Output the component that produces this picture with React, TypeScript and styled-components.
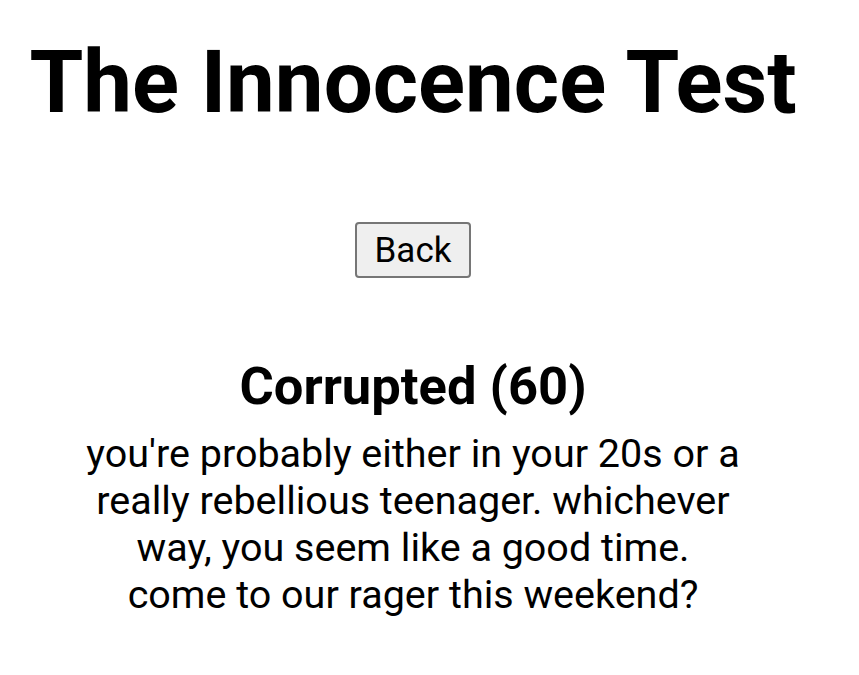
import styled, { createGlobalStyle } from 'styled-components';

const GlobalStyle = createGlobalStyle`
  body {
    margin: 0;
    background: #ffffff;
    font-family: Roboto, "Liberation Sans", sans-serif;
    color: #000000;
  }
`;

const Page = styled.div`
  width: 826px;
  display: flex;
  flex-direction: column;
  align-items: center;
  text-align: center;
`;

const Title = styled.h1`
  margin: 31px 0 0;
  font-size: 87px;
  font-weight: 700;
  line-height: normal;
`;

const BackButton = styled.button`
  margin-top: 89px;
  font-family: Roboto, "Liberation Sans", sans-serif;
  font-size: 35px;
  line-height: normal;
  padding: 5.5px 18px;
  color: #000;
  background: #efefef;
  border: 2px solid #767676;
  border-radius: 4px;
`;

const Result = styled.div`
  margin-top: 77px;
  width: 654px;
  display: flex;
  flex-direction: column;
  align-items: center;
`;

const Verdict = styled.h2`
  margin: 0;
  font-size: 52.5px;
  font-weight: 700;
  line-height: normal;
`;

const Blurb = styled.p`
  margin: 13px 0 0;
  font-size: 39.5px;
  line-height: normal;
`;

const App = () => {
  return (
    <Page>
      <GlobalStyle />
      <Title>The Innocence Test</Title>
      <BackButton>Back</BackButton>
      <Result>
        <Verdict>Corrupted (60)</Verdict>
        <Blurb>
          you're probably either in your 20s or a really rebellious teenager. whichever way, you seem like a good time. come to our rager this weekend?
        </Blurb>
      </Result>
    </Page>
  );
};

export default App;
